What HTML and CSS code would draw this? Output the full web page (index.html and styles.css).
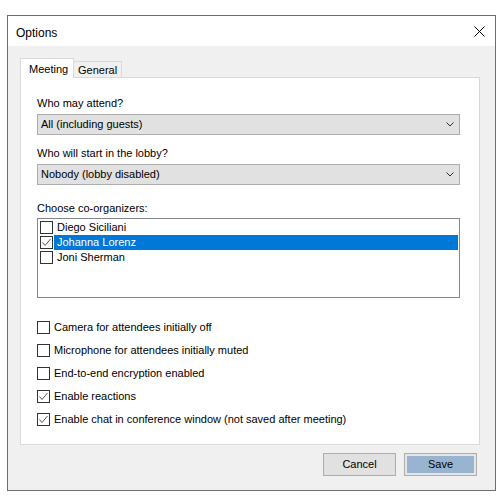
FILE: index.html
```html
<!DOCTYPE html>
<html>
<head>
<meta charset="utf-8">
<title>Options</title>
<link rel="stylesheet" href="styles.css">
</head>
<body>
<div class="window">
  <div class="titlebar">
    <span class="title">Options</span>
    <svg class="close" width="11" height="11" viewBox="0 0 11 11"><path d="M0.5 0.5 L10.5 10.5 M10.5 0.5 L0.5 10.5" stroke="#000" stroke-width="1" fill="none"/></svg>
  </div>
  <div class="client">
    <div class="tabs">
      <div class="tab active">Meeting</div>
      <div class="tab">General</div>
    </div>
    <div class="page">
      <div class="label first">Who may attend?</div>
      <div class="combo"><span>All (including guests)</span><svg width="8" height="5" viewBox="0 0 8 5"><path d="M0.5 0.5 L4 4 L7.5 0.5" stroke="#333" stroke-width="1" fill="none"/></svg></div>
      <div class="label">Who will start in the lobby?</div>
      <div class="combo"><span>Nobody (lobby disabled)</span><svg width="8" height="5" viewBox="0 0 8 5"><path d="M0.5 0.5 L4 4 L7.5 0.5" stroke="#333" stroke-width="1" fill="none"/></svg></div>
      <div class="label third">Choose co-organizers:</div>
      <div class="listbox">
        <div class="item"><span class="cb"></span><span class="itext">Diego Siciliani</span></div>
        <div class="item"><span class="cb"><svg width="11" height="11" viewBox="0 0 11 11"><path d="M1.5 5.5 L4 8.5 L9.5 2" stroke="#555" stroke-width="1" fill="none"/></svg></span><span class="itext selected">Johanna Lorenz</span></div>
        <div class="item"><span class="cb"></span><span class="itext">Joni Sherman</span></div>
      </div>
      <div class="options">
        <div class="opt"><span class="cb"></span><span>Camera for attendees initially off</span></div>
        <div class="opt"><span class="cb"></span><span>Microphone for attendees initially muted</span></div>
        <div class="opt"><span class="cb"></span><span>End-to-end encryption enabled</span></div>
        <div class="opt"><span class="cb"><svg width="11" height="11" viewBox="0 0 11 11"><path d="M1.5 5.5 L4 8.5 L9.5 2" stroke="#555" stroke-width="1" fill="none"/></svg></span><span>Enable reactions</span></div>
        <div class="opt"><span class="cb"><svg width="11" height="11" viewBox="0 0 11 11"><path d="M1.5 5.5 L4 8.5 L9.5 2" stroke="#555" stroke-width="1" fill="none"/></svg></span><span>Enable chat in conference window (not saved after meeting)</span></div>
      </div>
    </div>
    <div class="buttons">
      <div class="btn">Cancel</div>
      <div class="btn save">Save</div>
    </div>
  </div>
</div>
</body>
</html>
```

FILE: styles.css
```css
* { box-sizing: border-box; }
html, body { margin: 0; padding: 0; background: #fff; }
body {
  font-family: "Liberation Sans", Arial, sans-serif;
  font-size: 11px;
  line-height: 15px;
  color: #000;
}
.window {
  margin: 15px 0 0 7px;
  width: 489px;
  height: 476px;
  border: 1px solid #6d6d6d;
  display: flex;
  flex-direction: column;
  background: #f0f0f0;
}
.titlebar {
  height: 30px;
  background: #fff;
  display: flex;
  align-items: center;
  justify-content: space-between;
  padding: 3px 10px 0 8px;
}
.title {
  font-size: 12px;
  line-height: 16px;
}
.close { display: block; margin-top: -2px; }
.client {
  flex: 1;
  display: flex;
  flex-direction: column;
  padding: 12px 15px 0 12px;
}
.tabs {
  display: flex;
  align-items: flex-end;
  height: 19px;
}
.tab {
  height: 16px;
  border: 1px solid #d9d9d9;
  border-bottom: none;
  background: #f0f0f0;
  padding: 1px 4px 0 4px;
  margin-left: -1px;
  line-height: 15px;
}
.tab.active {
  height: 20px;
  margin-left: 0;
  margin-bottom: -1px;
  background: #fff;
  padding: 3px 8px 0 8px;
  width: 54px;
  position: relative;
  z-index: 1;
}
.page {
  height: 368px;
  border: 1px solid #d9d9d9;
  background: #fff;
  padding: 18px 19px 0 16px;
}
.label { margin-top: 11px; }
.label.first { margin-top: 0; }
.label.third { margin-top: 16px; }
.combo {
  margin-top: 3px;
  height: 21px;
  border: 1px solid #adadad;
  background: #e1e1e1;
  display: flex;
  align-items: center;
  justify-content: space-between;
  padding: 0 5px 0 3px;
  line-height: 19px;
}
.combo svg { display: block; }
.listbox {
  margin-top: 2px;
  height: 80px;
  border: 1px solid #828790;
  padding: 1px 1px 0 2px;
}
.item {
  height: 15px;
  display: flex;
  align-items: center;
}
.cb {
  width: 13px;
  height: 13px;
  border: 1px solid #333;
  background: #fff;
  flex: none;
  display: flex;
  align-items: center;
  justify-content: center;
}
.cb svg { display: block; }
.itext {
  flex: 1;
  height: 15px;
  margin-left: 1px;
  padding-left: 3px;
}
.itext.selected {
  background: #0078d7;
  color: #fff;
}
.options { margin-top: 18px; }
.opt {
  height: 23px;
  display: flex;
  align-items: center;
  gap: 4px;
}
.buttons {
  margin-top: 8px;
  display: flex;
  justify-content: flex-end;
  gap: 8px;
  padding-right: 3px;
}
.btn {
  width: 73px;
  height: 23px;
  border: 1px solid #adadad;
  background: #e1e1e1;
  text-align: center;
  line-height: 21px;
}
.btn.save {
  background: #99b4d1;
  box-shadow: inset 0 0 0 2px #e5e5e5;
}
```
